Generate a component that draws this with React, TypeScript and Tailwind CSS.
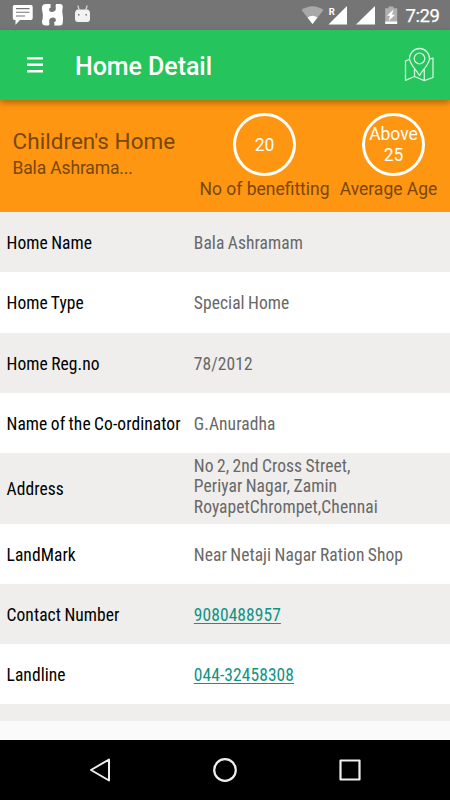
import React from 'react';

interface DetailRow {
  label: string;
  value: string;
  link?: boolean;
  tall?: boolean;
}

const rows: DetailRow[] = [
  { label: 'Home Name', value: 'Bala Ashramam' },
  { label: 'Home Type', value: 'Special Home' },
  { label: 'Home Reg.no', value: '78/2012' },
  { label: 'Name of the Co-ordinator', value: 'G.Anuradha' },
  { label: 'Address', value: 'No 2, 2nd Cross Street,\nPeriyar Nagar, Zamin\nRoyapetChrompet,Chennai', tall: true },
  { label: 'LandMark', value: 'Near Netaji Nagar Ration Shop' },
  { label: 'Contact Number', value: '9080488957', link: true },
  { label: 'Landline', value: '044-32458308', link: true },
];

const App: React.FC = () => {
  return (
    <div className="flex h-[800px] w-[450px] flex-col overflow-hidden bg-[#fafafa] font-[Roboto,sans-serif]">
      <StatusBar />
      <header className="z-10 flex h-[70px] shrink-0 items-center bg-[#25c45c] pr-4 pl-[27px] shadow-[0_3px_6px_rgba(0,0,0,0.3)]">
        <button aria-label="Menu" className="h-[16px] w-[16px]">
          <svg className="h-[16px] w-[16px]" viewBox="0 0 16 16" fill="#fff">
            <path d="M0 0h16v2.500H0zM0 6.500h16V9H0zM0 13h16v2.500H0z" />
          </svg>
        </button>
        <h1 className="ml-[32px] flex-1 pt-[3px] text-[25px] leading-[30px] font-medium tracking-[-0.05px] text-white">Home Detail</h1>
        <MapIcon />
      </header>
      <Summary />
      <main className="flex-1">
        {rows.map((row, i) => (
          <Row key={row.label} row={row} shaded={i % 2 === 0} />
        ))}
        <div className="h-[17px] bg-[#efeeec]" />
      </main>
      <NavBar />
    </div>
  );
};

const Row = ({ row, shaded }: { row: DetailRow; shaded: boolean }) => (
  <div className={`flex items-center pt-[2.5px] pl-[6.5px] text-[17.5px] leading-[20.6px] tracking-[0.07px] [word-spacing:-0.7px] font-['Roboto_Condensed',Roboto,sans-serif] [font-stretch:75%] ${row.tall ? 'h-[71.3px]' : 'h-[60.05px]'} ${shaded ? 'bg-[#efeeec]' : 'bg-white'}`}>
    <div className="w-[187.3px] shrink-0 whitespace-nowrap text-black">{row.label}</div>
    {row.link ? (
      <a className="text-[#109484] underline underline-offset-2">{row.value}</a>
    ) : (
      <div className={`whitespace-pre text-[#686868] ${row.tall ? 'pb-[6px]' : ''}`}>{row.value}</div>
    )}
  </div>
);

const Summary = () => (
  <section className="flex h-[112.45px] shrink-0 bg-[#ff9612] text-[17.5px] leading-[21px] text-[#794709]">
    <div className="w-[199px] pt-[28px] pl-[12.5px]">
      <div className="text-[22.5px] leading-[27px] tracking-[0.05px]">Children's Home</div>
      <div className="pt-[3px] tracking-[-0.15px]">Bala Ashrama...</div>
    </div>
    <div className="flex w-[131px] flex-col items-center pt-[13px]">
      <Circle text="20" />
      <div className="pt-[3px] whitespace-nowrap">No of benefitting</div>
    </div>
    <div className="ml-[9px] w-[99px] pt-[13px] text-center">
      <div className="flex justify-end pr-[13px]">
        <Circle text={'Above\n25'} />
      </div>
      <div className="pt-[3px] whitespace-nowrap">Average Age</div>
    </div>
  </section>
);

const Circle = ({ text }: { text: string }) => (
  <div className="flex h-[63px] w-[63px] shrink-0 items-center justify-center rounded-full border-[3px] border-white pt-[1px] text-center whitespace-pre text-white">
    {text}
  </div>
);

const StatusBar = () => (
  <div className="flex h-[30px] shrink-0 items-center bg-[#757575]">
    <svg className="h-[30px] w-[300px]" viewBox="0 0 300 30">
      <path fill="#fff" d="M14.500 5H31q1.700 0 1.700 1.700v11.600q0 1.700-1.700 1.700H20l-4.500 4.800V20h-1q-1.700 0-1.700-1.700V6.700Q12.800 5 14.500 5z" />
      <path stroke="#757575" strokeWidth="1.100" d="M16 8.600h13.500M16 12.300h13.500M16 16h9" />
      <path fill="#fff" d="M46 4h14q2.800 0 2.800 3-.9 3.500-.2 7.500.9 4 .2 7.500 0 3.500-3 3.500H46q-4 0-4-3.500 0-1.500.6-3 .7-4.500-.4-8.500-.4-2-.2-3.500Q42.500 4 46 4z" />
      <path fill="#757575" d="M51 3.500h5.500q-1.500 1.500-.7 4.300.4 3.700-3.600 4.200-3 .2-3.200-2.500.1-2 2-2.300-1.300-2 0-3.700z" />
      <path fill="#757575" d="M54 26h-5.500q1.500-1.500.7-4.300-.4-3.700 3.600-4.200 3-.2 3.200 2.500-.1 2-2 2.300 1.300 2 0 3.700z" />
      <path fill="#f2f2f2" d="M77.500 9.500h10q2.500.8 2.500 4.500v5q0 3-3 3h-9q-3 0-3-3v-5q0-3.700 2.500-4.500z" />
      <path stroke="#d8d8d8" strokeWidth="1.200" d="M77.800 5.500l1.600 5M87.200 5.500l-1.600 5" />
      <path fill="#757575" d="M78 14h1.500v1.500H78zM85.500 14H87v1.500h-1.500z" />
    </svg>
    <svg className="h-[30px] w-[103px]" viewBox="300 0 103 30">
      <path fill="#a8a8a8" d="M301.500 10q11-7.500 22 0l-11 14z" />
      <path fill="#fff" d="M307.500 17.500q5-3.500 10 0l-5 6.500z" />
      <path fill="#fff" d="M328.500 24.500L347 6v18.500zM356 24.500L375 6v18.500z" />
      <text x="328.700" y="15" fill="#fff" fontSize="9.500" fontWeight="700" className="font-[Roboto,sans-serif]">R</text>
      <path fill="#b0b0b0" d="M388.500 6.500h5v1.700h3.700V22h-12V8.200h3.300z" />
      <path fill="#fff" d="M385.200 21.500h12V24h-12zM393.500 9.500l-6.500 6.200h3L388.700 21l6.300-6.300h-3z" />
    </svg>
    <div className="pt-[2px] pl-[2.500px] text-[18.500px] leading-[22px] tracking-[-0.4px] text-white [-webkit-text-stroke:0.25px_white]">7:29</div>
  </div>
);

const MapIcon = () => (
  <svg className="h-[36px] w-[30px]" viewBox="0 0 30 36" fill="none" stroke="#d3f3df" strokeWidth="1.300" strokeLinejoin="round" strokeLinecap="round">
    <path d="M15.500 28.500C11.500 22 5.500 17 5.500 11.500a10 10 0 0 1 20 0c0 5.500-6 10.500-10 17z" />
    <circle cx="15.500" cy="11.500" r="5.300" />
    <path d="M5 12.500l-3.500 1.500v19.300l9-3.800 9.800 4.200 8.700-3.200V11l-2.500.8M10.500 22v7.500M20.300 22.500v11.200" />
  </svg>
);

const NavBar = () => (
  <nav className="flex h-[60px] shrink-0 items-center justify-between bg-black px-[88px]">
    <svg className="h-[24px] w-[24px]" viewBox="0 0 24 24" fill="none" stroke="#eee" strokeWidth="2" strokeLinejoin="round">
      <path d="M21 1.500v21L3 12z" />
    </svg>
    <svg className="h-[24px] w-[24px]" viewBox="0 0 24 24" fill="none" stroke="#eee" strokeWidth="2.200">
      <circle cx="12" cy="12" r="10.800" />
    </svg>
    <svg className="h-[24px] w-[24px]" viewBox="0 0 24 24" fill="none" stroke="#eee" strokeWidth="2.200" strokeLinejoin="round">
      <path d="M2.500 2.500h19v19h-19z" />
    </svg>
  </nav>
);

export default App;
